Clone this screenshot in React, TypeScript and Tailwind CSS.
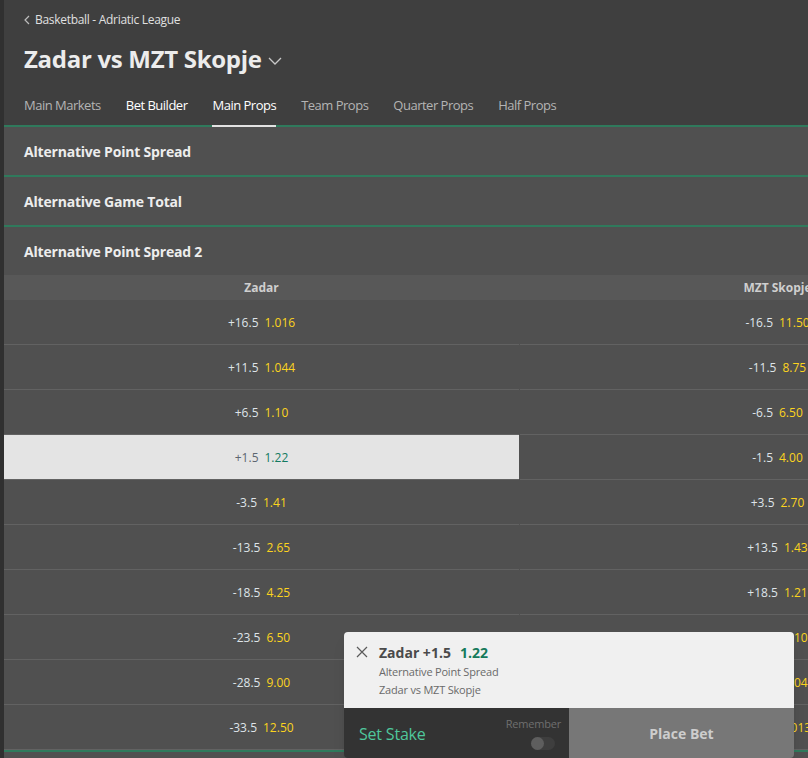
import React from "react";

const left: [string, string][] = [
  ["+16.5", "1.016"],
  ["+11.5", "1.044"],
  ["+6.5", "1.10"],
  ["+1.5", "1.22"],
  ["-3.5", "1.41"],
  ["-13.5", "2.65"],
  ["-18.5", "4.25"],
  ["-23.5", "6.50"],
  ["-28.5", "9.00"],
  ["-33.5", "12.50"],
];
const right: [string, string][] = [
  ["-16.5", "11.50"],
  ["-11.5", "8.75"],
  ["-6.5", "6.50"],
  ["-1.5", "4.00"],
  ["+3.5", "2.70"],
  ["+13.5", "1.43"],
  ["+18.5", "1.21"],
  ["+23.5", "1.10"],
  ["+28.5", "1.04"],
  ["+33.5", "1.013"],
];

const tabs = [
  { t: "Main Markets", c: "text-[#b4b4b4]" },
  { t: "Bet Builder", c: "text-white" },
  { t: "Main Props", c: "text-white", active: true },
  { t: "Team Props", c: "text-[#b4b4b4]" },
  { t: "Quarter Props", c: "text-[#b4b4b4]" },
  { t: "Half Props", c: "text-[#b4b4b4]" },
];

function Cell({ h, o, selected }: { h: string; o: string; selected?: boolean }) {
  return (
    <div
      className={`w-[515px] h-[45px] pt-[2px] border-b border-[#626262] flex items-center justify-center gap-[6px] text-[12px] ${
        selected ? "bg-[#e4e4e4]" : ""
      }`}
    >
      <span className={selected ? "text-[#5d6670]" : "text-[#dfe4e9]"}>{h}</span>
      <span className={selected ? "text-[#127a60]" : "text-[#fcd41e]"}>{o}</span>
    </div>
  );
}

export default function App() {
  return (
    <div
      className="relative w-[808px] h-[758px] overflow-hidden bg-[#505050] flex"
      style={{ fontFamily: '"Open Sans", "Noto Sans", sans-serif' }}
    >
      <div className="w-[4px] shrink-0 bg-[#303030]" />
      <div className="w-[1031px] shrink-0 flex flex-col">
        {/* Header */}
        <div className="bg-[#3f3f3f] pt-[12px] border-b-2 border-[#2f7a5c]">
          <div className="pl-[20px] flex items-center h-[16px] text-[12px] text-[#e0e0e0] tracking-[-0.3px]">
            <svg width="6" height="10" viewBox="0 0 6 10" className="mr-[5px]">
              <polyline points="5,1 1,5 5,9" fill="none" stroke="#bdbdbd" strokeWidth="1.2" />
            </svg>
            Basketball - Adriatic League
          </div>
          <div className="pl-[20px] mt-[15px] h-[32px] flex items-center">
            <span className="text-[24px] font-bold text-[#ececec] tracking-[-0.3px]">Zadar vs MZT Skopje</span>
            <svg width="14" height="8" viewBox="0 0 14 8" className="ml-[6px] mt-[4px]">
              <polyline points="1,1 7,7 13,1" fill="none" stroke="#c8c8c8" strokeWidth="1.3" />
            </svg>
          </div>
          <div className="pl-[20px] mt-[10px] flex gap-[25px] h-[40px]">
            {tabs.map((tb) => (
              <div
                key={tb.t}
                className={`flex items-center pt-[2px] text-[13px] tracking-[-0.5px] ${tb.c} -mb-[2px] border-b-2 ${
                  tb.active ? "border-[#e2e2e2]" : "border-transparent"
                }`}
              >
                {tb.t}
              </div>
            ))}
          </div>
        </div>
        {/* Sections */}
        {["Alternative Point Spread", "Alternative Game Total"].map((s) => (
          <div
            key={s}
            className="h-[50px] border-b-2 border-[#2f7a5c] flex items-center pl-[20px] text-[14px] font-bold text-[#ededed] tracking-[-0.2px]"
          >
            {s}
          </div>
        ))}
        <div className="h-[48px] flex items-center pl-[20px] text-[14px] font-bold text-[#ededed] tracking-[-0.2px]">
          Alternative Point Spread 2
        </div>
        <div className="h-[25px] bg-[#585858] flex text-[12px] font-bold text-[#cfcfcf]">
          <div className="w-[515px] flex items-center justify-center">Zadar</div>
          <div className="w-[1px]" />
          <div className="w-[515px] flex items-center justify-center">MZT Skopje</div>
        </div>
        <div className="flex border-b-2 border-[#2f7a5c]">
          <div className="flex flex-col">
            {left.map(([h, o], i) => (
              <Cell key={i} h={h} o={o} selected={i === 3} />
            ))}
          </div>
          <div className="w-[1px]" />
          <div className="flex flex-col">
            {right.map(([h, o], i) => (
              <Cell key={i} h={h} o={o} />
            ))}
          </div>
        </div>
      </div>

      {/* Bet slip popup */}
      <div className="absolute left-[344px] top-[632px] w-[450px] h-[126px] rounded-[4px] overflow-hidden flex flex-col shadow-lg">
        <div className="h-[76px] bg-[#f0f0f0] flex pt-[10px]">
          <div className="w-[35px] flex justify-center pt-[4px]">
            <svg width="12" height="12" viewBox="0 0 12 12">
              <path d="M1 1 L11 11 M11 1 L1 11" stroke="#5a5a5a" strokeWidth="1.2" />
            </svg>
          </div>
          <div className="flex flex-col">
            <div className="flex items-center gap-[9px] h-[20px] text-[14px] font-bold">
              <span className="text-[#4a4a4a]">Zadar +1.5</span>
              <span className="text-[#177a5b]">1.22</span>
            </div>
            <div className="text-[11px] text-[#6a6a6a] leading-[18px] mt-[1px] tracking-[-0.2px]">Alternative Point Spread</div>
            <div className="text-[11px] text-[#6a6a6a] leading-[18px] tracking-[-0.2px]">Zadar vs MZT Skopje</div>
          </div>
        </div>
        <div className="flex-1 flex">
          <div className="w-[225px] bg-[#333333] flex items-center justify-between pl-[15px] pr-[8px]">
            <span className="text-[16px] text-[#4fc79c] tracking-[-0.2px] mt-[2px]">Set Stake</span>
            <div className="flex flex-col items-end">
              <span className="text-[11px] text-[#6f6f6f] tracking-[-0.2px]">Remember</span>
              <div className="mt-[4px] mr-[6px] w-[24px] h-[13px] rounded-full bg-[#3e3e3e] relative">
                <div className="absolute left-0 top-0 w-[13px] h-[13px] rounded-full bg-[#5e5e5e]" />
              </div>
            </div>
          </div>
          <div className="flex-1 bg-[#777777] flex items-center justify-center">
            <span className="text-[14px] font-bold text-[#cdcdcd]">Place Bet</span>
          </div>
        </div>
      </div>
    </div>
  );
}
